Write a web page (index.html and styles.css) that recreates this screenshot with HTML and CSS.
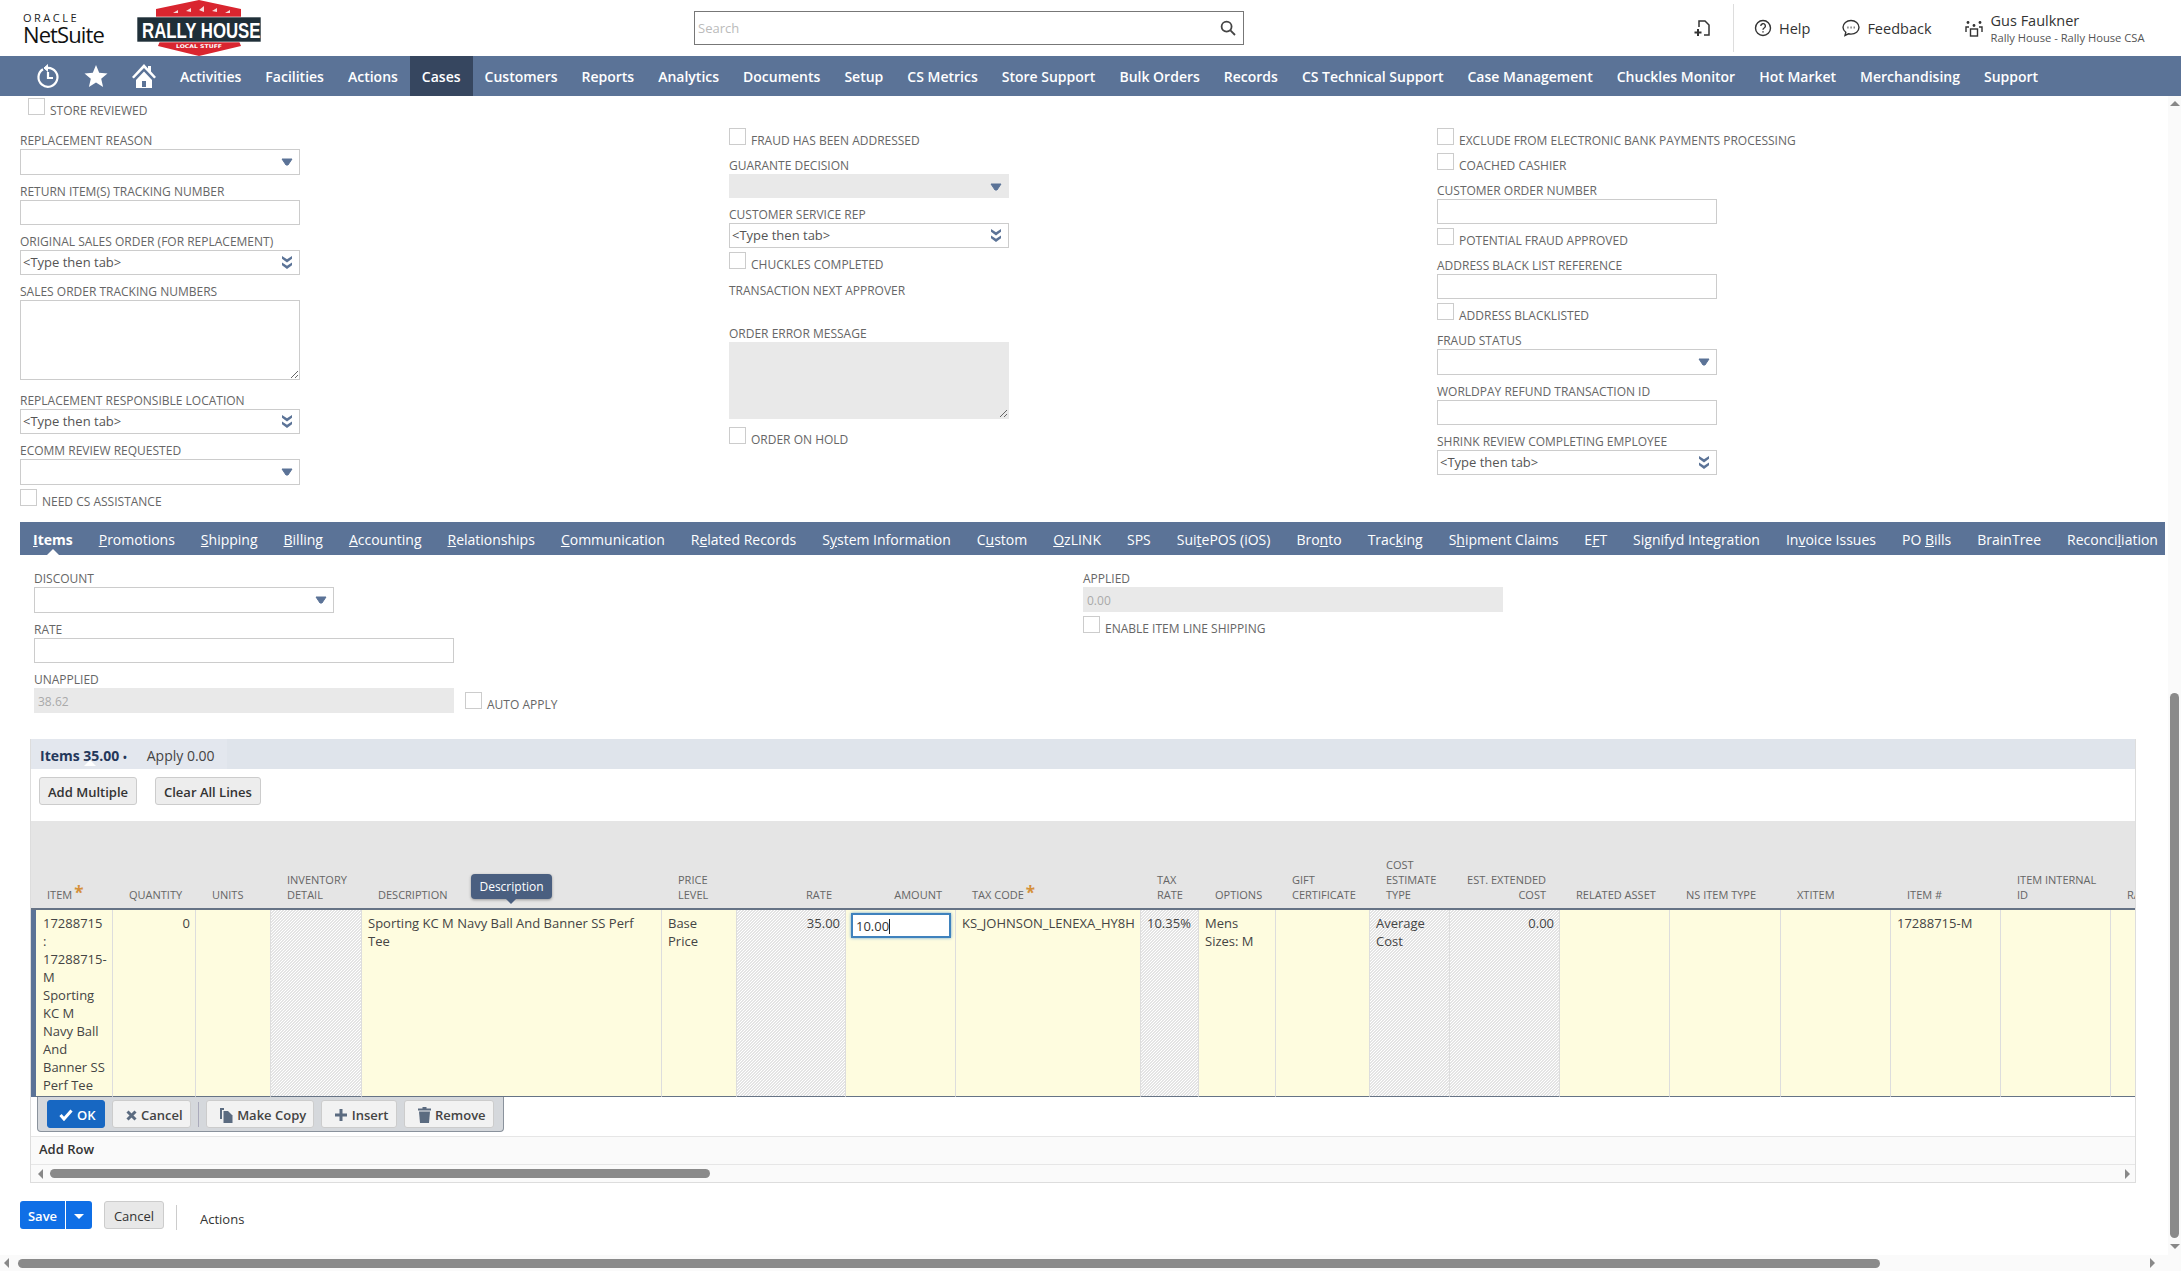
FILE: index.html
```html
<!DOCTYPE html>
<html>
<head>
    <meta name="viewport" content="width=device-width, initial-scale=1">
    <title>Cash Sale</title>
    <link rel="stylesheet" href="styles.css">
</head>
<body>

<header class="topbar">
    <div class="brand">
        <span class="brand-oracle">ORACLE</span>
        <span class="brand-name">NetSuite</span>
    </div>
    <svg class="rally-logo" width="124" height="56" viewBox="0 0 124 56">
        <polygon points="19,18 19,9 62,0 104,9 104,18" fill="#d9252f"/>
        <polygon points="23,41 102,41 104,46 62,56 21,46" fill="#d9252f"/>
        <polygon points="0,17 124,17 124,42 0,42" fill="#1f2f38" stroke="#fff" stroke-width="0.6"/>
        <path d="M36 13l5-3v3zM49 11l5-3v4zM62 10l5-4v6zM75 11l5-3v4zM88 13l5-3v3z" fill="#f7d9d9"/>
        <text class="rally-title" transform="translate(5 38) scale(.84 1.1)">RALLY HOUSE</text>
        <text class="rally-sub" x="39" y="48" textLength="46" lengthAdjust="spacingAndGlyphs">LOCAL STUFF</text>
    </svg>
    <div class="search">
        <span class="search-text">Search</span>
        <svg width="16" height="16" viewBox="0 0 16 16" fill="none" stroke="#444" stroke-width="1.8"><circle cx="6.6" cy="6.6" r="5"/><path d="M10.4 10.4l4.6 4.6"/></svg>
    </div>
    <div class="top-right">
        <svg class="new-rec" width="18" height="18" viewBox="0 0 18 18" fill="none" stroke="#333" stroke-width="1.5"><path d="M6 8V2h6l4 4v10H11"/><path d="M5 10v7M1.500 13.500h7" stroke-width="2"/></svg>
        <span class="top-sep"></span>
        <a class="top-link help-link">
            <svg width="18" height="18" viewBox="0 0 18 18" fill="none" stroke="#333" stroke-width="1.4"><circle cx="9" cy="9" r="7.500"/><path d="M6.800 7a2.300 2.300 0 1 1 3.400 2c-.8.500-1.200 1-1.200 1.800"/><path d="M9 12.200v1.400"/></svg>
            Help
        </a>
        <a class="top-link feedback-link">
            <svg width="18" height="18" viewBox="0 0 18 18" fill="none" stroke="#333" stroke-width="1.4"><path d="M9 1.500c4.400 0 8 2.900 8 6.800s-3.600 6.800-8 6.800c-.9 0-1.700-.1-2.500-.3L3 16.500l.8-3.200C2.100 12 1 10.300 1 8.300 1 4.400 4.600 1.500 9 1.500z"/><path d="M5.500 8.500h.9M8.600 8.500h.9M11.700 8.500h.9" stroke-width="1.800"/></svg>
            Feedback
        </a>
        <div class="user">
            <svg width="20" height="20" viewBox="0 0 20 20" fill="none" stroke="#333" stroke-width="1.4"><rect x="6.500" y="11" width="7" height="7"/><path d="M2 14V9h3M18 14V9h-3"/><circle cx="10" cy="7.500" r="1.400" fill="#333" stroke="none"/><circle cx="4" cy="4.500" r="1.400" fill="#333" stroke="none"/><circle cx="16" cy="4.500" r="1.400" fill="#333" stroke="none"/></svg>
            <div>
                <div class="user-name">Gus Faulkner</div>
                <div class="user-role">Rally House - Rally House CSA</div>
            </div>
        </div>
    </div>
</header>

<nav class="mainnav">
    <span class="nav-icon">
        <svg width="24" height="26" viewBox="0 0 24 26" fill="none" stroke="#fff" stroke-width="2.200"><path d="M7 6.200a9.500 9.500 0 1 0 5-1.400"/><path d="M12 1.500L8 5l4 3.500" fill="#fff" stroke-width="1"/><path d="M12 9v6h5"/></svg>
    </span>
    <span class="nav-icon">
        <svg width="24" height="24" viewBox="0 0 24 24" fill="#fff"><path d="M12 1l3.200 7.700 8.300.7-6.300 5.400 1.900 8.100L12 18.600l-7.100 4.300 1.900-8.100L.5 9.400l8.300-.7z"/></svg>
    </span>
    <span class="nav-icon">
        <svg width="26" height="26" viewBox="0 0 26 26" fill="#fff"><path d="M13 1L1 14l1.800 1.600L13 5l10.200 10.600L25 14l-5-5.400V3h-3v2.400z"/><path d="M5 17v8h16v-8l-8-8.500zM11 18h4v6h-4z" fill-rule="evenodd"/></svg>
    </span>
    <a>Activities</a><a>Facilities</a><a>Actions</a><a class="active">Cases</a><a>Customers</a><a>Reports</a><a>Analytics</a><a>Documents</a><a>Setup</a><a>CS Metrics</a><a>Store Support</a><a>Bulk Orders</a><a>Records</a><a>CS Technical Support</a><a>Case Management</a><a>Chuckles Monitor</a><a>Hot Market</a><a>Merchandising</a><a>Support</a>
</nav>

<main class="page">
    <div class="check store-check"><span class="box"></span><span class="check-label">STORE REVIEWED</span></div>

    <div class="form-cols">
        <div class="col col-first">
            <div class="field"><label>REPLACEMENT REASON</label><div class="ctl select"><svg class="arrow"><use href="#tri"/></svg></div></div>
            <div class="field"><label>RETURN ITEM(S) TRACKING NUMBER</label><div class="ctl"></div></div>
            <div class="field"><label>ORIGINAL SALES ORDER (FOR REPLACEMENT)</label><div class="ctl combo">&lt;Type then tab&gt;<svg class="arrow dbl"><use href="#dbl"/></svg></div></div>
            <div class="field area-field"><label>SALES ORDER TRACKING NUMBERS</label><div class="ctl area"><svg class="grip" width="8" height="8" viewBox="0 0 8 8" stroke="#666"><path d="M1 8l7-7M5 8l3-3"/></svg></div></div>
            <div class="field"><label>REPLACEMENT RESPONSIBLE LOCATION</label><div class="ctl combo">&lt;Type then tab&gt;<svg class="arrow dbl"><use href="#dbl"/></svg></div></div>
            <div class="field"><label>ECOMM REVIEW REQUESTED</label><div class="ctl select"><svg class="arrow"><use href="#tri"/></svg></div></div>
            <div class="check"><span class="box"></span><span class="check-label">NEED CS ASSISTANCE</span></div>
        </div>
        <div class="col">
            <div class="check"><span class="box"></span><span class="check-label">FRAUD HAS BEEN ADDRESSED</span></div>
            <div class="field"><label>GUARANTE DECISION</label><div class="ctl select off thin"><svg class="arrow"><use href="#tri"/></svg></div></div>
            <div class="field"><label>CUSTOMER SERVICE REP</label><div class="ctl combo">&lt;Type then tab&gt;<svg class="arrow dbl"><use href="#dbl"/></svg></div></div>
            <div class="check"><span class="box"></span><span class="check-label">CHUCKLES COMPLETED</span></div>
            <div class="field empty-field"><label>TRANSACTION NEXT APPROVER</label></div>
            <div class="field area-field"><label>ORDER ERROR MESSAGE</label><div class="ctl area area-off off"><svg class="grip" width="8" height="8" viewBox="0 0 8 8" stroke="#666"><path d="M1 8l7-7M5 8l3-3"/></svg></div></div>
            <div class="check"><span class="box"></span><span class="check-label">ORDER ON HOLD</span></div>
        </div>
        <div class="col">
            <div class="check"><span class="box"></span><span class="check-label">EXCLUDE FROM ELECTRONIC BANK PAYMENTS PROCESSING</span></div>
            <div class="check"><span class="box"></span><span class="check-label">COACHED CASHIER</span></div>
            <div class="field"><label>CUSTOMER ORDER NUMBER</label><div class="ctl"></div></div>
            <div class="check"><span class="box"></span><span class="check-label">POTENTIAL FRAUD APPROVED</span></div>
            <div class="field"><label>ADDRESS BLACK LIST REFERENCE</label><div class="ctl"></div></div>
            <div class="check"><span class="box"></span><span class="check-label">ADDRESS BLACKLISTED</span></div>
            <div class="field"><label>FRAUD STATUS</label><div class="ctl select"><svg class="arrow"><use href="#tri"/></svg></div></div>
            <div class="field"><label>WORLDPAY REFUND TRANSACTION ID</label><div class="ctl"></div></div>
            <div class="field"><label>SHRINK REVIEW COMPLETING EMPLOYEE</label><div class="ctl combo">&lt;Type then tab&gt;<svg class="arrow dbl"><use href="#dbl"/></svg></div></div>
        </div>
    </div>

    <div class="subtabs">
        <a class="active"><u>I</u>tems</a>
        <a><u>P</u>romotions</a>
        <a><u>S</u>hipping</a>
        <a><u>B</u>illing</a>
        <a><u>A</u>ccounting</a>
        <a><u>R</u>elationships</a>
        <a><u>C</u>ommunication</a>
        <a>R<u>e</u>lated Records</a>
        <a>S<u>y</u>stem Information</a>
        <a>C<u>u</u>stom</a>
        <a><u>O</u>zLINK</a>
        <a>SPS</a>
        <a>Sui<u>t</u>ePOS (iOS)</a>
        <a>Bro<u>n</u>to</a>
        <a>Trac<u>k</u>ing</a>
        <a>S<u>h</u>ipment Claims</a>
        <a>E<u>F</u>T</a>
        <a>Signifyd Integration</a>
        <a>In<u>v</u>oice Issues</a>
        <a>PO <u>B</u>ills</a>
        <a>BrainTree</a>
        <a>Reconci<u>l</u>iation</a>
    </div>

    <div class="items-form">
        <div class="items-left">
            <div class="field"><label>DISCOUNT</label><div class="ctl select w300"><svg class="arrow"><use href="#tri"/></svg></div></div>
            <div class="field"><label>RATE</label><div class="ctl w420"></div></div>
            <div class="field unapplied">
                <div><label>UNAPPLIED</label><div class="ctl off w420 value-off">38.62</div></div>
                <div class="check"><span class="box"></span><span class="check-label">AUTO APPLY</span></div>
            </div>
        </div>
        <div class="items-right">
            <div class="field"><label>APPLIED</label><div class="ctl off w420 value-off">0.00</div></div>
            <div class="check"><span class="box"></span><span class="check-label">ENABLE ITEM LINE SHIPPING</span></div>
        </div>
    </div>

    <section class="machine">
        <div class="machine-tabs">
            <div class="tab-group">
                <a class="active">Items 35.00 <span class="dot">&bull;</span></a>
                <a>Apply 0.00</a>
            </div>
        </div>
        <div class="machine-btns">
            <button class="btn">Add Multiple</button>
            <button class="btn">Clear All Lines</button>
        </div>
        <div class="grid-wrap">
            <table class="lines">
                <colgroup>
                    <col class="w82"><col class="w83"><col class="w75"><col class="w91"><col class="w300"><col class="w75"><col class="w109"><col class="w110"><col class="w185"><col class="w58"><col class="w77"><col class="w94"><col class="w80"><col class="w110"><col class="w110"><col class="w111"><col class="w110"><col class="w110"><col class="w110"><col class="w110">
                </colgroup>
                <thead>
                    <tr>
                        <th>ITEM<span class="req">*</span></th>
                        <th class="num">QUANTITY</th>
                        <th>UNITS</th>
                        <th>INVENTORY DETAIL</th>
                        <th>DESCRIPTION</th>
                        <th>PRICE LEVEL</th>
                        <th class="num">RATE</th>
                        <th class="num">AMOUNT</th>
                        <th>TAX CODE<span class="req">*</span></th>
                        <th>TAX RATE</th>
                        <th>OPTIONS</th>
                        <th>GIFT CERTIFICATE</th>
                        <th>COST ESTIMATE TYPE</th>
                        <th class="num">EST. EXTENDED COST</th>
                        <th>RELATED ASSET</th>
                        <th>NS ITEM TYPE</th>
                        <th>XTITEM</th>
                        <th>ITEM #</th>
                        <th>ITEM INTERNAL ID</th>
                        <th>RATE CODE</th>
                    </tr>
                </thead>
                <tbody>
                    <tr>
                        <td class="first">17288715<br>:<br>17288715-<br>M<br>Sporting<br>KC M<br>Navy Ball<br>And<br>Banner SS<br>Perf Tee</td>
                        <td class="num">0</td>
                        <td></td>
                        <td class="locked"></td>
                        <td>Sporting KC M Navy Ball And Banner SS Perf Tee</td>
                        <td>Base Price</td>
                        <td class="num locked">35.00</td>
                        <td class="amount"><div class="amount-input">10.00<span class="caret"></span></div></td>
                        <td>KS_JOHNSON_LENEXA_HY8H</td>
                        <td class="locked">10.35%</td>
                        <td>Mens Sizes: M</td>
                        <td></td>
                        <td class="locked">Average Cost</td>
                        <td class="num locked">0.00</td>
                        <td></td>
                        <td></td>
                        <td></td>
                        <td>17288715-M</td>
                        <td></td>
                        <td></td>
                    </tr>
                </tbody>
            </table>
            <div class="tip">Description</div>
        </div>
        <div class="row-actions">
            <button class="rbtn ok">
                <svg width="14" height="12" viewBox="0 0 14 12" fill="none" stroke="#fff" stroke-width="3"><path d="M1.500 6l3.500 4 7.500-8.500"/></svg>OK
            </button>
            <button class="rbtn">
                <svg width="11" height="11" viewBox="0 0 11 11" fill="none" stroke="#5b6b80" stroke-width="3"><path d="M1.500 1.500l8 8M9.500 1.500l-8 8"/></svg>Cancel
            </button>
            <span class="row-sep"></span>
            <button class="rbtn">
                <svg width="13" height="15" viewBox="0 0 13 15" fill="#5b6b80"><path d="M0 0h4v2H2v9H0z"/><path d="M3.500 3H8l4.500 4.500V15h-9z"/></svg>Make Copy
            </button>
            <button class="rbtn">
                <svg width="12" height="12" viewBox="0 0 12 12" fill="#5b6b80"><path d="M4.500 0h3v4.500H12v3H7.500V12h-3V7.500H0v-3h4.500z"/></svg>Insert
            </button>
            <button class="rbtn">
                <svg width="13" height="16" viewBox="0 0 13 16" fill="#5b6b80"><path d="M0 1.500h4.500V0h4v1.500H13v2H0z"/><path d="M1 4.500h11L11 16H2z"/></svg>Remove
            </button>
        </div>
        <div class="add-row">Add Row</div>
        <div class="machine-scroll">
            <span class="arr-left"></span>
            <span class="thumb"></span>
            <span class="arr-right"></span>
        </div>
    </section>

    <div class="footer-btns">
        <div class="save-group"><button class="save">Save</button><button class="save-more"><span></span></button></div>
        <button class="btn cancel">Cancel</button>
        <span class="foot-sep"></span>
        <a class="foot-actions">Actions</a>
    </div>

    <!-- page scrollbars -->
    <div class="vscroll"><span class="arr-up"></span><span class="thumb"></span><span class="arr-down"></span></div>
    <div class="hscroll"><span class="arr-left"></span><span class="thumb"></span><span class="arr-right"></span></div>
</main>

<svg class="defs" width="0" height="0">
    <symbol id="tri" viewBox="0 0 12 8"><path d="M1 1h10L7 7H5z" fill="#5b7397" stroke="#5b7397" stroke-linejoin="round"/></symbol>
    <symbol id="dbl" viewBox="0 0 12 12" preserveAspectRatio="none"><path d="M1 0l5 3 5-3v2.500L6 6 1 2.500zM1 6l5 3 5-3v2.500L6 12 1 8.500z" fill="#5b7397"/></symbol>
</svg>

</body>
</html>
```

FILE: styles.css
```css
* {box-sizing: border-box;}

html, body {
    margin: 0;
    height: 100%;
    overflow: hidden;
}

body {
    font-family: "Open Sans", "Liberation Sans", sans-serif;
    font-size: 13px;
    color: #333;
    background: #fff;
}

/* Top bar */
.topbar {
    height: 56px;
    display: flex;
    align-items: center;
    background: #fff;
}

.brand {
    width: 137px;
    padding-left: 23px;
    height: 56px;
    display: flex;
    flex-direction: column;
}

.brand-oracle {
    margin-top: 12px;
    font-size: 11px;
    line-height: 11px;
    letter-spacing: 2.5px;
    color: #222;
}

.brand-name {
    font-size: 22px;
    line-height: 23px;
    letter-spacing: -0.9px;
    color: #111;
}

.rally-logo {flex: none;}

.rally-title {
    font-family: "Liberation Sans", sans-serif;
    font-size: 20px;
    font-weight: 700;
    fill: #fff;
}

.rally-sub {
    font-family: "DejaVu Sans", sans-serif;
    font-size: 5px;
    font-weight: 700;
    fill: #fff;
}

.search {
    width: 550px;
    height: 34px;
    margin-left: 433px;
    border: 1px solid #777;
    display: flex;
    align-items: center;
    justify-content: space-between;
    padding: 0 7px 0 3px;
}

.search-text {
    font-size: 13px;
    color: #bbb;
}

.top-right {
    flex: 1;
    display: flex;
    align-items: center;
    height: 56px;
}

.new-rec {
    margin-left: 449px;
}

.top-sep {
    width: 1px;
    height: 48px;
    background: #ddd;
    margin-left: 22px;
}

.top-link {
    display: flex;
    align-items: center;
    gap: 7px;
    font-size: 14.5px;
    color: #333;
}

.help-link {margin-left: 20px;}
.feedback-link {margin-left: 32px;}

.user {
    display: flex;
    align-items: center;
    gap: 7px;
    margin-left: 32px;
}

.user-name {
    font-size: 14.5px;
    line-height: 18px;
}

.user-role {
    font-size: 11.2px;
    line-height: 15px;
    color: #555;
}

/* Main menu */
.mainnav {
    height: 40px;
    padding-left: 24px;
    display: flex;
    align-items: stretch;
    background: #5b7397;
}

.nav-icon {
    width: 48px;
    display: flex;
    align-items: center;
    justify-content: center;
}

.mainnav a {
    padding: 0 12px;
    display: flex;
    align-items: center;
    font-size: 14px;
    font-weight: 600;
    color: #fff;
    white-space: nowrap;
}

.mainnav a.active {
    background: #36465f;
}

/* Page body */
.page {
    position: relative;
    height: 1175px;
    overflow: hidden;
}

label, .check-label {
    display: block;
    font-size: 12px;
    color: #666;
    white-space: nowrap;
}

label {
    padding-top: 2px;
    line-height: 16px;
}

.check-label {
    padding-top: 4px;
    line-height: 18px;
}

.check {
    display: flex;
    gap: 5px;
    height: 22px;
    margin-bottom: 6px;
}

.field + .check, .check + .check {
    margin-top: -3px;
}

.box {
    flex: none;
    width: 17px;
    height: 17px;
    border: 1px solid #ccc;
    background: #fff;
}

.store-check {
    margin: 2px 0 8px 28px;
}

.form-cols {
    display: grid;
    grid-template-columns: 709px 708px 1fr;
    padding-left: 20px;
    height: 394px;
}

.col-first {
    padding-top: 3px;
}

.field {
    margin-bottom: 7px;
}

.area-field {
    margin-bottom: 11px;
}

.ctl {
    position: relative;
    width: 280px;
    height: 25px;
    border: 1px solid #ccc;
    background: #fff;
    font-size: 13px;
    line-height: 23px;
    padding-left: 2px;
    color: #555;
}

.arrow {
    position: absolute;
    right: 6px;
    top: 8px;
    width: 12px;
    height: 8px;
}

.arrow.dbl {
    top: 5px;
    height: 13px;
    right: 6px;
}

.select {height: 26px;}
.thin {height: 24px;}

.off {
    background: #e9e9e9;
    border-color: #e9e9e9;
}

.area {height: 80px;}
.area-off {height: 77px;}

.grip {
    position: absolute;
    right: 1px;
    bottom: 1px;
}

.empty-field {
    height: 37px;
    padding-top: 1px;
}

.w300 {width: 300px;}
.w420 {width: 420px;}

.value-off {
    padding-left: 3px;
    color: #aaa;
    font-size: 12px;
    line-height: 25px;
}

/* Subtabs */
.subtabs {
    margin-left: 20px;
    width: 2145px;
    height: 33px;
    display: flex;
    background: #5b7397;
}

.subtabs a {
    padding: 0 13px;
    font-size: 14px;
    line-height: 36px;
    color: #fff;
    white-space: nowrap;
    position: relative;
}

.subtabs a.active {
    font-weight: 700;
}

.subtabs a.active::after {
    content: "";
    position: absolute;
    left: 50%;
    bottom: 0;
    margin-left: -6px;
    border: 6px solid transparent;
    border-top: 0;
    border-bottom-color: #fff;
}

.items-form {
    display: grid;
    grid-template-columns: 1049px 1fr;
    padding: 14px 0 0 34px;
    height: 184px;
}

.unapplied {
    display: flex;
    align-items: flex-start;
    gap: 11px;
}

.unapplied .check {
    margin-top: 22px;
}

/* Sublist box */
.machine {
    margin-left: 30px;
    width: 2106px;
    height: 444px;
    border: 1px solid #ddd;
    border-width: 0 1px 2px 1px;
}

.machine-tabs {
    height: 30px;
    background: #dfe4eb;
}

.tab-group {
    width: 196px;
    height: 30px;
    display: flex;
    gap: 20px;
    padding-left: 9px;
    background: #e3e7ee;
}

.tab-group a {
    font-size: 14px;
    line-height: 33px;
    color: #444;
    white-space: nowrap;
    position: relative;
}

.tab-group a.active {
    font-weight: 700;
    color: #24385b;
}

.tab-group a.active::after {
    content: "";
    position: absolute;
    left: 44px;
    bottom: 3px;
    border: 6px solid transparent;
    border-top: 0;
    border-bottom-color: #fff;
}

.dot {font-size: 10px;}

.machine-btns {
    height: 52px;
    padding: 8px 8px 0;
    display: flex;
    gap: 18px;
    align-items: flex-start;
}

.btn {
    height: 28px;
    padding: 2px 8px 0;
    font-family: inherit;
    font-size: 13px;
    font-weight: 600;
    color: #333;
    background: #ededed;
    border: 1px solid #ccc;
    border-radius: 3px;
}

.grid-wrap {
    position: relative;
    height: 276px;
    overflow: hidden;
}

.lines {
    table-layout: fixed;
    width: 2190px;
    border-collapse: separate;
    border-spacing: 0;
}

.w82 {width: 82px;}
.w83 {width: 83px;}
.w75 {width: 75px;}
.w91 {width: 91px;}
.w109 {width: 109px;}
.w110 {width: 110px;}
.w111 {width: 111px;}
.w185 {width: 185px;}
.w58 {width: 58px;}
.w77 {width: 77px;}
.w94 {width: 94px;}
.w80 {width: 80px;}
col.w300 {width: 300px;}

.lines th {
    height: 89px;
    padding: 0 14px 6px 16px;
    vertical-align: bottom;
    text-align: left;
    font-size: 11px;
    line-height: 15px;
    font-weight: 400;
    color: #666;
    background: #e5e5e5;
    border-bottom: 2px solid #667385;
}

.lines th.num {text-align: right;}

.req {
    color: #d5903a;
    font-size: 17px;
    font-weight: 700;
    line-height: 11px;
    margin-left: 2px;
}

.lines td {
    height: 187px;
    padding: 4px 6px 2px;
    vertical-align: top;
    font-size: 13px;
    line-height: 18px;
    color: #444;
    background: #fefcdf;
    border-right: 1px solid #ddd;
    border-bottom: 2px solid #667385;
}

.lines td.num {
    padding-right: 5px;
    text-align: right;
}

.lines td.first {
    padding-left: 7px;
    border-left: 5px solid #5b7397;
}

/* read only cells have the grey hatch */
.lines td.locked {
    background-color: #fff;
    background-image: linear-gradient(135deg, #e4e4e4 25%, transparent 25%, transparent 50%, #e4e4e4 50%, #e4e4e4 75%, transparent 75%);
    background-size: 3px 3px;
}

.lines td.amount {
    padding: 3px 5px;
}

.amount-input {
    width: 100px;
    height: 25px;
    padding-left: 3px;
    line-height: 23px;
    color: #333;
    background: #fff;
    border: 2px solid #3f82bd;
    box-shadow: 0 0 3px #6ea6d6;
    font-size: 13px;
}

.caret {
    display: inline-block;
    width: 1px;
    height: 15px;
    background: #222;
    vertical-align: -3px;
}

.tip {
    position: absolute;
    left: 440px;
    top: 53px;
    width: 81px;
    height: 25px;
    text-align: center;
    font-size: 12px;
    line-height: 25px;
    color: #fff;
    background: #4a5f80;
    border-radius: 4px;
    box-shadow: 0 1px 3px rgba(0, 0, 0, 0.35);
}

.tip::after {
    content: "";
    position: absolute;
    left: 35px;
    top: 25px;
    border: 5px solid transparent;
    border-bottom: 0;
    border-top-color: #4a5f80;
}

.row-actions {
    width: 467px;
    height: 35px;
    margin-left: 6px;
    padding: 3px 8px 0 9px;
    display: flex;
    gap: 7px;
    align-items: flex-start;
    background: #d5d8dc;
    border: 1px solid #8a929c;
    border-top: 0;
    border-radius: 0 0 4px 4px;
}

.rbtn {
    flex: none;
    height: 28px;
    padding: 2px 7px 0 13px;
    display: flex;
    align-items: center;
    gap: 4.5px;
    font-family: inherit;
    font-size: 13px;
    font-weight: 600;
    color: #444;
    white-space: nowrap;
    background: #f2f2f2;
    border: 1px solid #ccc;
    border-radius: 3px;
}

.rbtn.ok {
    padding: 2px 8px 0 11px;
    gap: 4px;
    color: #fff;
    background: #1767c2;
    border-color: #1767c2;
}

.row-sep {
    flex: none;
    width: 1px;
    height: 25px;
    margin-top: 2px;
    background: #aab;
}

.add-row {
    height: 29px;
    margin-top: 4px;
    padding-left: 8px;
    font-size: 13px;
    font-weight: 600;
    line-height: 25px;
    color: #333;
    background: #fafafa;
    border: 1px solid #e6e6e6;
    border-width: 1px 0;
}

.machine-scroll {
    position: relative;
    height: 17px;
    background: #fafafa;
}

.machine-scroll .thumb {
    position: absolute;
    left: 19px;
    top: 4px;
    width: 660px;
    height: 9px;
    background: #8a8a8a;
    border-radius: 5px;
}

.arr-left, .arr-right, .arr-up, .arr-down {
    position: absolute;
    width: 0;
    height: 0;
    border: 5px solid transparent;
}

.arr-left {border-right-color: #888; border-left: 0;}
.arr-right {border-left-color: #888; border-right: 0;}
.arr-up {border-bottom-color: #888; border-top: 0;}
.arr-down {border-top-color: #888; border-bottom: 0;}

.machine-scroll .arr-left {left: 7px; top: 4px;}
.machine-scroll .arr-right {right: 5px; top: 4px;}

/* Footer buttons */
.footer-btns {
    margin: 18px 0 0 20px;
    display: flex;
    align-items: flex-start;
}

.save-group {display: flex;}

.save, .save-more {
    height: 28px;
    border: 0;
    background: #0f6fe6;
    color: #fff;
    font-family: inherit;
    font-size: 13px;
    font-weight: 600;
}

.save {
    width: 46px;
    border-radius: 3px 0 0 3px;
    border-right: 1px solid #fff;
    padding: 2px 0 0;
}

.save-more {
    width: 26px;
    border-radius: 0 3px 3px 0;
    padding: 0;
}

.save-more span {
    display: block;
    width: 0;
    margin: 2px auto 0;
    border: 5px solid transparent;
    border-bottom: 0;
    border-top-color: #fff;
}

.cancel {
    margin-left: 12px;
    width: 60px;
    padding: 2px 0 0;
    font-weight: 400;
    background: #e8e8e8;
}

.foot-sep {
    width: 1px;
    height: 25px;
    margin: 4px 0 0 12px;
    background: #ccc;
}

.foot-actions {
    margin-left: 23px;
    margin-top: 8px;
    font-size: 13px;
    line-height: 20px;
    color: #333;
}

/* Page scrollbars */
.vscroll {
    position: absolute;
    right: 0;
    top: 0;
    bottom: 0;
    width: 13px;
    background: #fafafa;
}

.vscroll .thumb {
    position: absolute;
    left: 2px;
    top: 597px;
    width: 9px;
    height: 545px;
    background: #8a8a8a;
    border-radius: 5px;
}

.vscroll .arr-up {left: 2px; top: 5px;}
.vscroll .arr-down {left: 2px; top: 1148px;}

.hscroll {
    position: absolute;
    left: 0;
    right: 13px;
    bottom: 0;
    height: 16px;
    background: #fafafa;
}

.hscroll .thumb {
    position: absolute;
    left: 18px;
    top: 4px;
    width: 1862px;
    height: 9px;
    background: #8a8a8a;
    border-radius: 5px;
}

.hscroll .arr-left {left: 4px; top: 3px;}
.hscroll .arr-right {right: 13px; top: 3px;}

.defs {position: absolute;}
```
